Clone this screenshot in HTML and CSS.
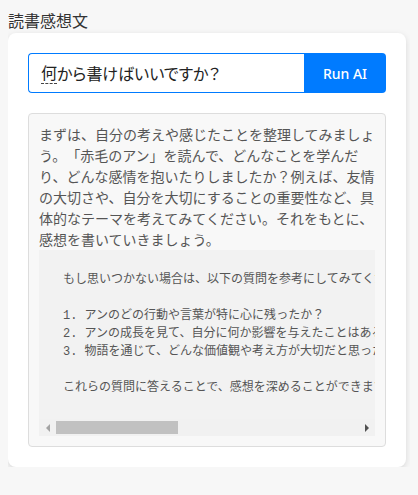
FILE: index.html
```html
<!DOCTYPE html>
<html lang="ja">
<head>
<meta charset="utf-8">
<title>読書感想文</title>
<link rel="stylesheet" href="styles.css">
</head>
<body>
<div class="title">読書感想文</div>
<div class="card">
  <div class="ask">
    <div class="field"><span class="ime">何</span>から書けばいいですか？</div>
    <button class="run">Run AI</button>
  </div>
  <div class="output">
    <p class="answer">まずは、自分の考えや感じたことを整理してみましょう。「赤毛のアン」を読んで、どんなことを学んだり、どんな感情を抱いたりしましたか？例えば、友情の大切さや、自分を大切にすることの重要性など、具体的なテーマを考えてみてください。それをもとに、感想を書いていきましょう。</p>
    <div class="codebox">
      <pre class="code">もし思いつかない場合は、以下の質問を参考にしてみてください。

1. アンのどの行動や言葉が特に心に残ったか？
2. アンの成長を見て、自分に何か影響を与えたことはあるか？
3. 物語を通じて、どんな価値観や考え方が大切だと思ったか？

これらの質問に答えることで、感想を深めることができます。自分の経験と結びつけて、あなたらしい感想文を書いてみてください。</pre>
      <div class="hscroll">
        <span class="arrow left"></span>
        <span class="track"><span class="thumb"></span></span>
        <span class="arrow right"></span>
      </div>
    </div>
  </div>
</div>
</body>
</html>
```
FILE: styles.css
```css
* { box-sizing: border-box; }

body {
  margin: 8px;
  background: #f7f7f7;
  font-family: "Noto Sans CJK JP", "Noto Sans", sans-serif;
  color: #333;
  text-spacing-trim: space-all;
}

.title {
  font-size: 16px;
  line-height: 25px;
  color: #333;
}

.card {
  width: 398px;
  background: #fff;
  border-radius: 8px;
  padding: 20px;
  box-shadow: 0 2px 6px rgba(0, 0, 0, 0.13);
}

.ask {
  display: flex;
  height: 40px;
}

.field {
  flex: 1;
  display: flex;
  align-items: center;
  border: 1px solid #007bff;
  border-right: none;
  border-radius: 4px 0 0 4px;
  padding: 0 12px;
  font-size: 16px;
  font-feature-settings: "palt";
  color: #222;
  white-space: nowrap;
}

.ime {
  border-bottom: 1px dashed #444;
  line-height: 21px;
}

.run {
  width: 82px;
  border: none;
  border-radius: 0 4px 4px 0;
  background: #007bff;
  color: #fff;
  font-family: "Noto Sans", sans-serif;
  font-size: 14px;
  font-weight: 500;
  padding: 0;
}

.output {
  margin-top: 20px;
  background: #f8f8f8;
  border: 1px solid #ddd;
  border-radius: 4px;
  padding: 10px;
  color: #555;
}

.answer {
  margin: 0;
  font-size: 14px;
  line-height: 21px;
}

.codebox {
  background: #f2f2f2;
}

.code {
  margin: 0;
  padding: 21px 24px 22px;
  font-family: "Liberation Mono", "Noto Sans CJK JP", monospace;
  font-size: 12px;
  line-height: 18px;
  color: #555;
  overflow: hidden;
}

.hscroll {
  display: flex;
  height: 17px;
  background: #f1f1f1;
}

.arrow {
  width: 17px;
  display: flex;
  align-items: center;
  justify-content: center;
}

.arrow::before {
  content: "";
  width: 0;
  height: 0;
  border-top: 4px solid transparent;
  border-bottom: 4px solid transparent;
}

.arrow.left::before {
  border-right: 4px solid #a3a3a3;
}

.arrow.right::before {
  border-left: 4px solid #505050;
}

.track {
  flex: 1;
  display: flex;
  align-items: center;
}

.thumb {
  width: 122px;
  height: 13px;
  background: #c1c1c1;
}
```
